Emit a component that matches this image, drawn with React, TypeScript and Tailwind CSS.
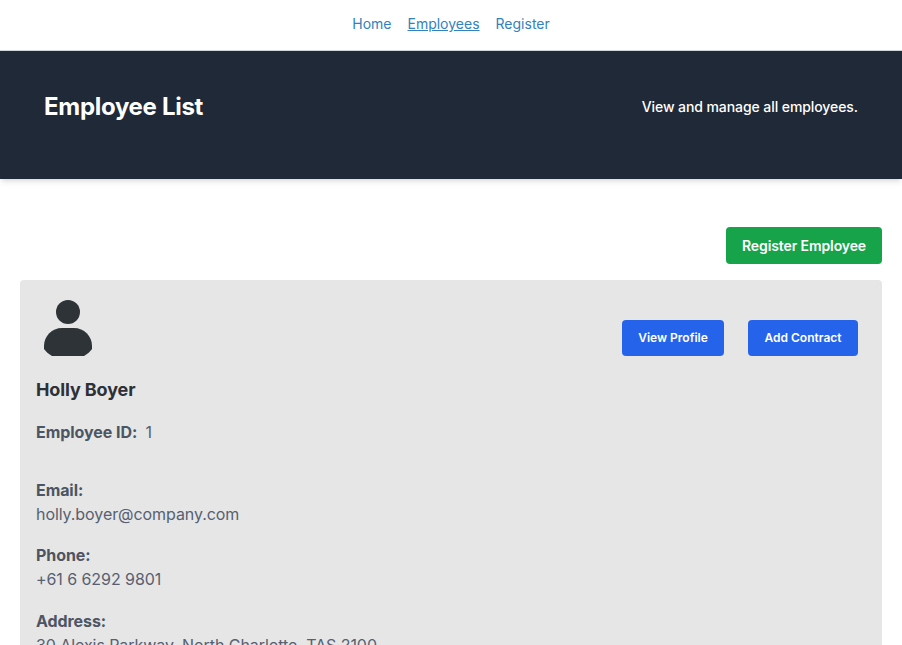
import React from "react";

function Field({ label, value }: { label: string; value: string }) {
  return (
    <div className="mb-[17.3px] leading-6">
      <p className="font-bold tracking-[-0.08px]">{label}</p>
      <p className="font-normal tracking-[-0.07px] whitespace-nowrap text-[#566070]">{value}</p>
    </div>
  );
}

export default function App() {
  return (
    <div className="h-[645px] overflow-hidden bg-white font-[Inter,sans-serif] text-[#4b5563]">
      <nav className="flex h-[51px] justify-center gap-4 border-b border-gray-300 pt-3 text-sm leading-6 text-[#3182bd]">
        <a href="#">Home</a>
        <a href="#" className="underline">Employees</a>
        <a href="#">Register</a>
      </nav>
      <header className="flex h-32 justify-between bg-[#1f2937] px-11 pt-10 text-white shadow-md">
        <h1 className="text-2xl leading-8 font-bold tracking-[-0.3px]">Employee List</h1>
        <p className="text-sm leading-8 font-medium tracking-[-0.08px]">View and manage all employees.</p>
      </header>
      <main className="px-5 pt-12">
        <div className="mb-4 flex justify-end">
          <button className="h-[37px] w-[156px] rounded bg-[#16a34a] text-sm font-semibold tracking-[-0.1px] text-white">Register Employee</button>
        </div>
        <section className="h-[500px] rounded bg-[#e6e6e6] px-4 pt-5">
          <div className="flex justify-between px-2">
            <svg width="48" height="56" viewBox="0 0 48 56" fill="#2d3336">
              <circle cx="24" cy="12" r="12" />
              <path d="M18 28h12c10 0 18 8 18 18v3c-2 3-5 5-8 7H8c-3-2-6-4-8-7v-3C0 36 8 28 18 28Z" />
            </svg>
            <div className="flex gap-6 pt-5 text-xs font-semibold text-white">
              <button className="h-9 w-[102px] rounded bg-[#2563eb]">View Profile</button>
              <button className="h-9 w-[110px] rounded bg-[#2563eb]">Add Contract</button>
            </div>
          </div>
          <h2 className="mt-5 text-lg leading-7 font-bold tracking-[-0.12px] text-[#2d3036]">Holly Boyer</h2>
          <p className="mt-4 mb-[34px] leading-6"><span className="mr-2 font-bold tracking-[-0.04px]">Employee ID:</span><span className="font-normal text-[#566070]">1</span></p>
          <Field label="Email:" value="holly.boyer@company.com" />
          <Field label="Phone:" value="+61 6 6292 9801" />
          <Field label="Address:" value="30 Alexis Parkway, North Charlotte, TAS 2100" />
        </section>
      </main>
    </div>
  );
}
